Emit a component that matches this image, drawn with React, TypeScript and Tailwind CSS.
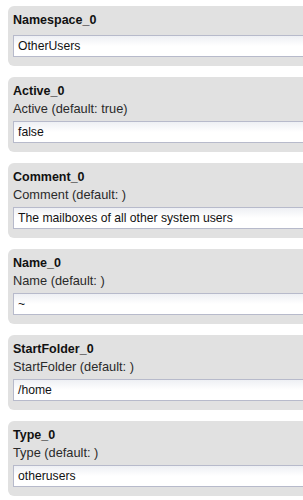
import React from "react";

const font = { fontFamily: '"Liberation Sans", Arial, sans-serif' };

type Item = { title: string; sub?: string; value: string };

const items: Item[] = [
  { title: "Namespace_0", value: "OtherUsers" },
  { title: "Active_0", sub: "Active (default: true)", value: "false" },
  { title: "Comment_0", sub: "Comment (default: )", value: "The mailboxes of all other system users" },
  { title: "Name_0", sub: "Name (default: )", value: "~" },
  { title: "StartFolder_0", sub: "StartFolder (default: )", value: "/home" },
  { title: "Type_0", sub: "Type (default: )", value: "otherusers" },
];

function Card({ item }: { item: Item }) {
  return (
    <div className="w-[330px] shrink-0 rounded-[6px] bg-[#e1e1e1] pl-[5px] pt-[5px] pb-[9px]">
      <div className="h-[18px] text-[12.5px] font-bold leading-[18px] text-[#111]">{item.title}</div>
      {item.sub ? (
        <div className="h-[18px] text-[12.8px] leading-[18px] text-[#2a2a2a]">{item.sub}</div>
      ) : null}
      <div
        className={`${item.sub ? "mt-[3px]" : "mt-[6px]"} flex h-[22px] items-center border border-[#b7bacb] bg-gradient-to-b from-[#eef0f4] via-white to-white pl-[4px] text-[12.2px] text-[#111]`}
      >
        {item.value}
      </div>
    </div>
  );
}

export default function App() {
  return (
    <div className="h-[500px] w-[303px] overflow-hidden bg-white" style={font}>
      <div className="flex flex-col gap-[11px] pl-[8px] pt-[6px]">
        {items.map((it) => (
          <Card key={it.title} item={it} />
        ))}
      </div>
    </div>
  );
}
